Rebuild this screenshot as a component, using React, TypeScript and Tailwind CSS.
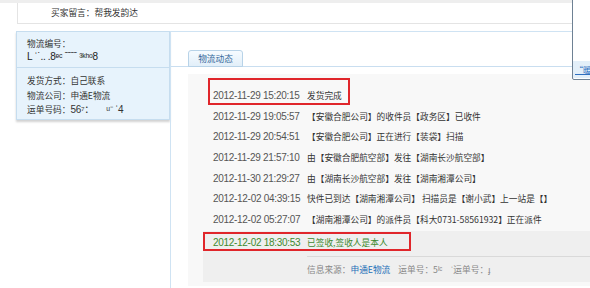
import React from 'react'

const rows = [
  { time: '2012-11-29 15:20:15', text: '发货完成' },
  { time: '2012-11-29 19:05:57', text: '【安徽合肥公司】的收件员【政务区】已收件' },
  { time: '2012-11-29 20:54:51', text: '【安徽合肥公司】正在进行【装袋】扫描' },
  { time: '2012-11-29 21:57:10', text: '由【安徽合肥航空部】发往【湖南长沙航空部】' },
  { time: '2012-11-30 21:29:27', text: '由【湖南长沙航空部】发往【湖南湘潭公司】' },
  { time: '2012-12-02 04:39:15', text: '快件已到达【湖南湘潭公司】 扫描员是【谢小武】上一站是【】' },
  { time: '2012-12-02 05:27:07', text: '【湖南湘潭公司】的派件员【科大0731-58561932】正在派件' },
]

const cn = "font-['Noto_Sans_CJK_SC',sans-serif]"
const num = "font-['Liberation_Sans','Noto_Sans_CJK_SC',sans-serif] text-[10px] tracking-[-0.3px]"

const App = () => {
  return (
    <div className={`relative w-[590px] h-[288px] overflow-hidden bg-white text-[8.7px] text-[#333] ${cn}`}>
      {/* top strip */}
      <div className="h-[3px] bg-[#eeeeee]" />
      <div className="ml-[17px] h-[21px] border-l border-b border-[#e4e4e4] flex items-center pl-[33px]">
        买家留言：帮我发韵达
      </div>
      <div className="h-[7px]" />

      <div className="flex">
        {/* left info panel */}
        <div className="ml-[16px] w-[154px] h-[89px] bg-[#e7f3fc] border border-[#c6ddef] shadow-[0_2px_2px_rgba(0,0,0,0.18)] shrink-0">
          <div className="h-[36px] border-b border-[#c6ddef] pl-[10px] pt-[5px] leading-[13px]">
            <div>物流编号：</div>
            <div className={`${num} text-[#222]`}>L ˈ˙.. .8ᵉᶜ ˉˉˉˉ ³ᵏʰᵒ8</div>
          </div>
          <div className="pl-[10px] pt-[6px] flex flex-col gap-[1px] leading-[13.5px]">
            <div>发货方式：自己联系</div>
            <div>物流公司：申通E物流</div>
            <div>
              运单号码：<span className={num}>56⁷：&nbsp;&nbsp;&nbsp;&nbsp;&nbsp;ᵘ⁻ ˈ4</span>
            </div>
          </div>
        </div>

        {/* right logistics area */}
        <div className="flex-1 h-[257px] border-l border-t border-[#cfe3f3]">
          <div className="mt-[18px] pl-[17px] border-b border-[#c9def0] flex">
            <div className="w-[55px] h-[17px] -mb-px bg-gradient-to-b from-[#f6fbff] to-[#e2eff9] border border-[#b8d3e8] rounded-t-[3px] flex items-center justify-center text-[#35689a]">
              物流动态
            </div>
          </div>

          <div className="ml-[17px] mt-[7px] bg-[#f8f8f8] pt-[11px] pb-[4px]">
            {rows.map((r) => (
              <div key={r.time} className="h-[20.7px] flex items-center pl-[25px] whitespace-nowrap">
                <span className={`${num} w-[94px] shrink-0 text-[#555]`}>{r.time}</span>
                <span>{r.text}</span>
              </div>
            ))}

            <div className="ml-[15px] mt-[1px] bg-[#efefef]">
              <div className="h-[23px] flex items-center pl-[10px] whitespace-nowrap text-[#3d8a2e]">
                <span className={`${num} w-[94px] shrink-0`}>2012-12-02 18:30:53</span>
                <span>已签收,签收人是本人</span>
              </div>
              <div className="ml-[104px] mt-[2px] border-t border-[#d9d9d9] h-[26px] flex items-center whitespace-nowrap text-[#888]">
                <span>信息来源：</span>
                <span className="text-[#1f6fb8]">申通E物流</span>
                <span className="ml-[8px]">运单号：5ᴵᶜ</span>
                <span className="ml-[8px]">ˈ运单号：ɟ</span>
              </div>
            </div>
          </div>
        </div>
      </div>

      {/* red annotation boxes */}
      <div className="absolute left-[208px] top-[78px] w-[142px] h-[27px] border-2 border-[#e0262b]" />
      <div className="absolute left-[203px] top-[232px] w-[208px] h-[19px] border-2 border-[#e0262b]" />

      {/* cut-off popup at top right */}
      <div className="absolute left-[572px] -top-px w-[30px] h-[81px] bg-white border border-[#6e8194] rounded-bl-[2px] flex flex-col justify-end">
        <div className="h-[17px] mb-[1px] bg-[#e3eff9] flex items-center pl-[2px] text-[8px] text-[#2e6fc0] underline whitespace-nowrap">
          “暖
        </div>
      </div>
    </div>
  )
}

export default App
